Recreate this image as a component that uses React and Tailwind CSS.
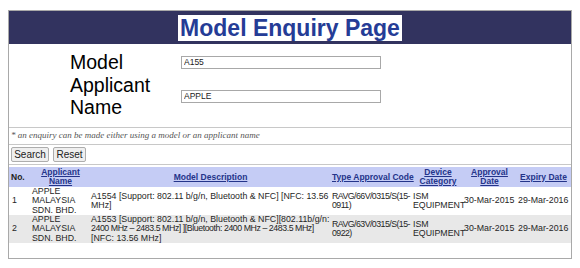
const ROWS = [
  {
    no: '1',
    applicant: ['APPLE', 'MALAYSIA', 'SDN. BHD.'],
    description: [
      { text: 'A1554 [Support: 802.11 b/g/n, Bluetooth & NFC] [NFC: 13.56', tight: false },
      { text: 'MHz]', tight: false },
    ],
    code: ['RAVG/66V/0315/S(15-', '0911)'],
    approval: '30-Mar-2015',
    expiry: '29-Mar-2016',
  },
  {
    no: '2',
    applicant: ['APPLE', 'MALAYSIA', 'SDN. BHD.'],
    description: [
      { text: 'A1553 [Support: 802.11 b/g/n, Bluetooth & NFC][802.11b/g/n:', tight: false },
      { text: '2400 MHz – 2483.5 MHz] ][Bluetooth: 2400 MHz – 2483.5 MHz]', tight: true },
      { text: '[NFC: 13.56 MHz]', tight: false },
    ],
    code: ['RAVG/63V/0315/S(15-', '0922)'],
    approval: '30-Mar-2015',
    expiry: '29-Mar-2016',
  },
]

function HeadLink({ children }) {
  return <span className="text-[#24348a] underline">{children}</span>
}

function FormRow({ label, value, className }) {
  return (
    <div className={`flex items-center ${className}`}>
      <div className="w-[111px] text-[19.5px] leading-[22px] text-black">{label}</div>
      <input
        readOnly
        value={value}
        className="h-[13px] w-[200px] border border-[#a8a8a8] bg-white px-[2px] text-[8.5px] leading-[11px] text-[#222] outline-none"
      />
    </div>
  )
}

export default function App() {
  return (
    <div
      className="h-[268px] w-[580px] bg-white px-[8px] pt-[10px]"
      style={{ fontFamily: '"Liberation Sans", Arial, sans-serif' }}
    >
      <div className="h-[249px] border border-[#a9a9a9]">
        <div className="flex h-[33px] items-center justify-center bg-[#32335f]">
          <h1 className="bg-white px-[2px] text-[23px] font-bold leading-[26px] text-[#253c96]">
            Model Enquiry Page
          </h1>
        </div>

        <div className="h-[84px] border-b border-[#c8c8c8] pl-[61px] pt-[6px]">
          <FormRow label="Model" value="A155" className="h-[24px]" />
          <FormRow
            label={
              <>
                Applicant
                <br />
                Name
              </>
            }
            value="APPLE"
            className="h-[44px]"
          />
        </div>

        <div
          className="flex h-[17px] items-center border-b border-[#c8c8c8] pl-[2px] text-[9px] italic text-[#555]"
          style={{ fontFamily: '"Liberation Serif", "Times New Roman", serif' }}
        >
          * an enquiry can be made either using a model or an applicant name
        </div>

        <div className="flex h-[20px] items-center gap-[4px] border-b border-[#c8c8c8] pl-[2px]">
          <button
            type="button"
            className="h-[15px] w-[38px] rounded-[2px] border border-[#adadad] bg-[#efefef] text-[10px] leading-[13px] text-[#222]"
          >
            Search
          </button>
          <button
            type="button"
            className="h-[15px] w-[33px] rounded-[2px] border border-[#adadad] bg-[#efefef] text-[10px] leading-[13px] text-[#222]"
          >
            Reset
          </button>
        </div>

        <table className="mt-[2px] w-full table-fixed border-collapse text-[8.8px] leading-[9.3px] text-[#262626]">
          <colgroup>
            <col className="w-[22px]" />
            <col className="w-[59px]" />
            <col className="w-[241px]" />
            <col className="w-[82px]" />
            <col className="w-[50px]" />
            <col className="w-[53px]" />
            <col />
          </colgroup>
          <thead>
            <tr className="h-[20px] bg-[#c5ccf5] text-[8.5px] font-bold leading-[9px]">
              <th className="px-[2px] text-left text-[#222]">No.</th>
              <th className="px-[1px] text-center">
                <HeadLink>
                  Applicant
                  <br />
                  Name
                </HeadLink>
              </th>
              <th className="px-[1px] text-center">
                <HeadLink>Model Description</HeadLink>
              </th>
              <th className="whitespace-nowrap px-[1px] text-left">
                <HeadLink>Type Approval Code</HeadLink>
              </th>
              <th className="px-[1px] text-center">
                <HeadLink>
                  Device
                  <br />
                  Category
                </HeadLink>
              </th>
              <th className="px-[1px] text-center">
                <HeadLink>
                  Approval
                  <br />
                  Date
                </HeadLink>
              </th>
              <th className="whitespace-nowrap px-[1px] text-center">
                <HeadLink>Expiry Date</HeadLink>
              </th>
            </tr>
          </thead>
          <tbody>
            {ROWS.map((r, i) => (
              <tr key={r.no} className={`h-[28px] ${i % 2 ? 'bg-[#e8e8e8]' : 'bg-white'}`}>
                <td className="px-[3px] align-middle">{r.no}</td>
                <td className="px-[1px] align-middle">
                  {r.applicant.map((l) => (
                    <div key={l}>{l}</div>
                  ))}
                </td>
                <td className="whitespace-nowrap px-[1px] align-middle">
                  {r.description.map((l) => (
                    <div key={l.text} className={l.tight ? 'tracking-[-0.45px]' : ''}>
                      {l.text}
                    </div>
                  ))}
                </td>
                <td className="whitespace-nowrap px-[1px] align-middle tracking-[-0.55px]">
                  {r.code.map((l) => (
                    <div key={l}>{l}</div>
                  ))}
                </td>
                <td className="align-middle">
                  <div>ISM</div>
                  <div>EQUIPMENT</div>
                </td>
                <td className="whitespace-nowrap px-[1px] align-middle">{r.approval}</td>
                <td className="whitespace-nowrap px-[2px] align-middle">{r.expiry}</td>
              </tr>
            ))}
          </tbody>
        </table>
      </div>
    </div>
  )
}
